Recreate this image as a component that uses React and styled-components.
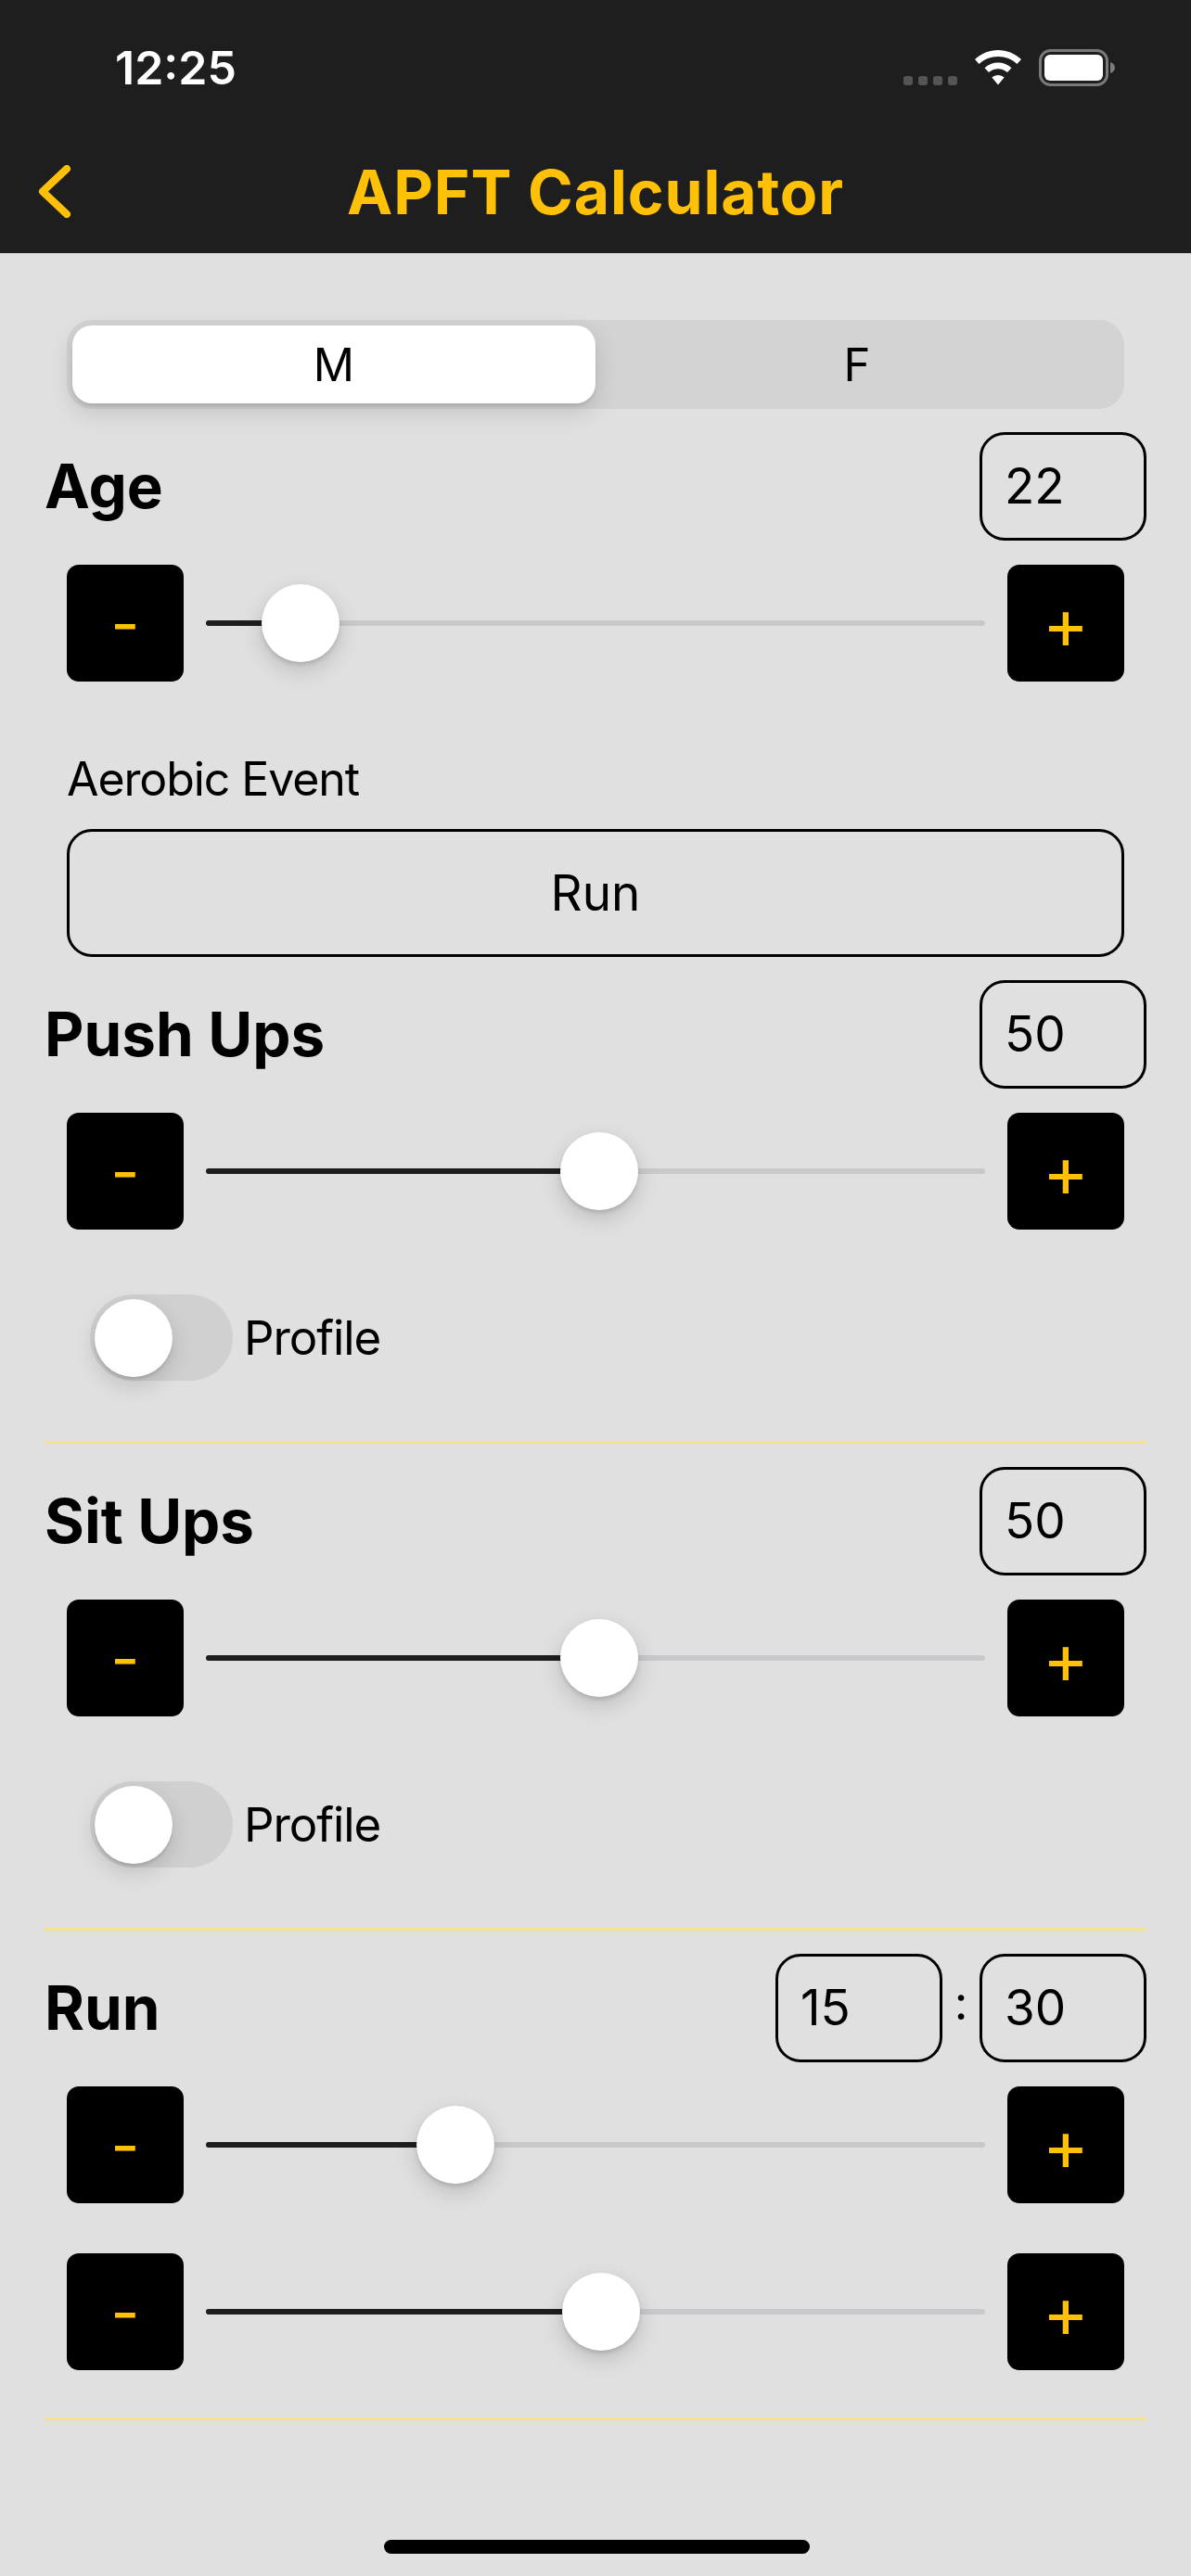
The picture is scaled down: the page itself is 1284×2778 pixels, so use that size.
import styled, { createGlobalStyle } from 'styled-components'

const GlobalStyle = createGlobalStyle`
  html, body {
    margin: 0;
    padding: 0;
    background: #e0e0e0;
  }
  * {
    box-sizing: border-box;
  }
`

const Page = styled.div`
  position: relative;
  width: 1284px;
  height: 2778px;
  overflow: hidden;
  background: #e0e0e0;
  color: #000;
  font-family: 'Inter', 'Liberation Sans', sans-serif;
`

const Header = styled.header`
  height: 273px;
  background: #1e1e1e;
`

const StatusBar = styled.div`
  display: flex;
  align-items: center;
  justify-content: space-between;
  height: 146px;
  padding: 0 82px 0 124px;
`

const Time = styled.div`
  color: #fff;
  font-size: 50px;
  font-weight: 600;
  line-height: 1;
`

const StatusIcons = styled.div`
  display: flex;
  align-items: center;
  gap: 19px;
`

const SignalDots = styled.div`
  display: flex;
  gap: 6px;
  align-self: flex-end;
  padding-bottom: 1px;
`

const Dot = styled.span`
  width: 10px;
  height: 10px;
  border-radius: 3px;
  background: #555;
`

const NavBar = styled.div`
  display: grid;
  grid-template-columns: 200px 1fr 200px;
  align-items: center;
  height: 127px;
  margin-top: -3px;
`

const BackButton = styled.div`
  display: flex;
  padding-left: 41px;
`

const Title = styled.h1`
  margin: 0;
  color: #ffc107;
  font-size: 66px;
  font-weight: 700;
  line-height: 1;
  letter-spacing: 0.9px;
  text-align: center;
`

const Content = styled.main`
  display: flex;
  flex-direction: column;
  padding: 72px 48px 0;
`

const Segment = styled.div`
  display: flex;
  height: 96px;
  margin: 0 24px 25px;
  padding: 6px;
  border-radius: 27px;
  background: #d3d3d3;
`

const SegmentItem = styled.div`
  display: flex;
  flex: 1;
  align-items: center;
  justify-content: center;
  border-radius: 21px;
  font-size: 49px;
  line-height: 1;
  background: ${(p) => (p.$active ? '#fff' : 'transparent')};
  box-shadow: ${(p) => (p.$active ? '0 9px 27px rgba(0, 0, 0, 0.14), 0 3px 3px rgba(0, 0, 0, 0.08)' : 'none')};
`

const MetricHead = styled.div`
  display: flex;
  align-items: center;
  justify-content: space-between;
  margin-bottom: 26px;
`

const MetricName = styled.h2`
  margin: 0;
  font-size: 65.5px;
  font-weight: 700;
  line-height: 1;
`

const Values = styled.div`
  display: flex;
  align-items: center;
`

const ValueBox = styled.div`
  display: flex;
  align-items: center;
  width: 180px;
  height: 117px;
  padding-left: 24px;
  border: 3px solid #000;
  border-radius: 27px;
  font-size: 53px;
  line-height: 1;
`

const Colon = styled.span`
  width: 40px;
  padding-bottom: 12px;
  font-size: 51px;
  line-height: 1;
  text-align: center;
`

const SliderRow = styled.div`
  display: flex;
  align-items: center;
  gap: 24px;
  margin: 0 24px ${(p) => p.$gap || 0}px;
`

const StepButton = styled.div`
  display: flex;
  flex: none;
  align-items: center;
  justify-content: center;
  width: 126px;
  height: 126px;
  border-radius: 13px;
  background: #000;
  color: #ffc107;
  font-size: ${(p) => p.$size}px;
  font-weight: 400;
  line-height: 1;
`

const Track = styled.div`
  position: relative;
  flex: 1;
  height: 6px;
  border-radius: 3px;
  background: #c9c9cb;
`

const TrackFill = styled.div`
  position: absolute;
  left: 0;
  top: 0;
  height: 6px;
  border-radius: 3px;
  background: #1e1e1e;
`

const Thumb = styled.div`
  position: absolute;
  top: -39px;
  width: 84px;
  height: 84px;
  margin-left: -42px;
  border-radius: 50%;
  background: #fff;
  box-shadow: 0 9px 24px rgba(0, 0, 0, 0.16), 0 3px 4px rgba(0, 0, 0, 0.12);
`

const EventLabel = styled.div`
  margin: 0 24px 23px;
  font-size: 50px;
  line-height: 62px;
  letter-spacing: -1.1px;
`

const EventSelect = styled.div`
  display: flex;
  align-items: center;
  justify-content: center;
  height: 138px;
  margin: 0 24px 25px;
  border: 3px solid #000;
  border-radius: 27px;
  font-size: 53px;
  line-height: 1;
`

const ToggleRow = styled.div`
  display: flex;
  align-items: center;
  gap: 12px;
  margin: 0 49px;
`

const ToggleTrack = styled.div`
  display: flex;
  align-items: center;
  width: 154px;
  height: 93px;
  padding-left: 5px;
  border-radius: 47px;
  background: #d0d0d0;
`

const ToggleKnob = styled.div`
  width: 84px;
  height: 84px;
  border-radius: 50%;
  background: #fff;
  box-shadow: 0 9px 24px rgba(0, 0, 0, 0.15), 0 3px 3px rgba(0, 0, 0, 0.1);
`

const ToggleLabel = styled.span`
  font-size: 51px;
  line-height: 1;
  letter-spacing: -1.1px;
`

const Divider = styled.hr`
  flex: none;
  width: 100%;
  height: 3px;
  margin: ${(p) => p.$top || 65}px 0 25px;
  border: 0;
  background: #f3e48a;
`

const HomeIndicator = styled.div`
  position: absolute;
  left: 414px;
  bottom: 24px;
  width: 459px;
  height: 15px;
  border-radius: 8px;
  background: #000;
`

const WifiIcon = () => (
  <svg width="50" height="38" viewBox="0 0 50 38">
    <path
      fill="#fff"
      d="M25 0C34 0 43 3.5 50 10L45.5 15C40 9.8 32.8 7 25 7C17.2 7 10 9.8 4.5 15L0 10C7 3.5 16 0 25 0Z"
    />
    <path
      fill="#fff"
      d="M25 13.5C30.5 13.5 35.5 15.5 39.5 19.2L35 24C32.3 21.6 28.8 20.2 25 20.2C21.2 20.2 17.7 21.6 15 24L10.5 19.2C14.5 15.5 19.5 13.5 25 13.5Z"
    />
    <path fill="#fff" d="M25 27C27.5 27 29.8 27.9 31.6 29.5L25 37.5L18.4 29.5C20.2 27.9 22.5 27 25 27Z" />
  </svg>
)

const BatteryIcon = () => (
  <svg width="82" height="40" viewBox="0 0 82 40">
    <rect x="1.5" y="1.5" width="72" height="37" rx="11" fill="none" stroke="#7a7a7a" strokeWidth="3" />
    <rect x="6" y="6" width="63" height="28" rx="6" fill="#fff" />
    <path fill="#7a7a7a" d="M77 14C80 15 82 17 82 20C82 23 80 25 77 26Z" />
  </svg>
)

const BackIcon = () => (
  <svg width="36" height="57" viewBox="0 0 36 57">
    <path d="M31 4L5 28.5L31 53" fill="none" stroke="#ffc107" strokeWidth="8" strokeLinecap="round" strokeLinejoin="round" />
  </svg>
)

const Slider = ({ ratio, gap }) => {
  // thumb center stays inside the track, same as the native control
  const left = `calc(42px + (100% - 84px) * ${ratio})`
  return (
    <SliderRow $gap={gap}>
      <StepButton $size={68}>-</StepButton>
      <Track>
        <TrackFill style={{ width: left }} />
        <Thumb style={{ left }} />
      </Track>
      <StepButton $size={76}>+</StepButton>
    </SliderRow>
  )
}

const Toggle = () => (
  <ToggleRow>
    <ToggleTrack>
      <ToggleKnob />
    </ToggleTrack>
    <ToggleLabel>Profile</ToggleLabel>
  </ToggleRow>
)

const App = () => {
  return (
    <Page>
      <GlobalStyle />
      <Header>
        <StatusBar>
          <Time>12:25</Time>
          <StatusIcons>
            <SignalDots>
              <Dot />
              <Dot />
              <Dot />
              <Dot />
            </SignalDots>
            <WifiIcon />
            <BatteryIcon />
          </StatusIcons>
        </StatusBar>
        <NavBar>
          <BackButton>
            <BackIcon />
          </BackButton>
          <Title>APFT Calculator</Title>
        </NavBar>
      </Header>
      <Content>
        <Segment>
          <SegmentItem $active>M</SegmentItem>
          <SegmentItem>F</SegmentItem>
        </Segment>

        <MetricHead>
          <MetricName>Age</MetricName>
          <ValueBox>22</ValueBox>
        </MetricHead>
        <Slider ratio={5 / 63} gap={74} />
        <EventLabel>Aerobic Event</EventLabel>
        <EventSelect>Run</EventSelect>

        <MetricHead>
          <MetricName>Push Ups</MetricName>
          <ValueBox>50</ValueBox>
        </MetricHead>
        <Slider ratio={50 / 99} gap={70} />
        <Toggle />
        <Divider />

        <MetricHead>
          <MetricName>Sit Ups</MetricName>
          <ValueBox>50</ValueBox>
        </MetricHead>
        <Slider ratio={50 / 99} gap={70} />
        <Toggle />
        <Divider />

        <MetricHead>
          <MetricName>Run</MetricName>
          <Values>
            <ValueBox>15</ValueBox>
            <Colon>:</Colon>
            <ValueBox>30</ValueBox>
          </Values>
        </MetricHead>
        <Slider ratio={15 / 50} gap={54} />
        <Slider ratio={30 / 59} />
        <Divider $top={51} />
      </Content>
      <HomeIndicator />
    </Page>
  )
}

export default App
